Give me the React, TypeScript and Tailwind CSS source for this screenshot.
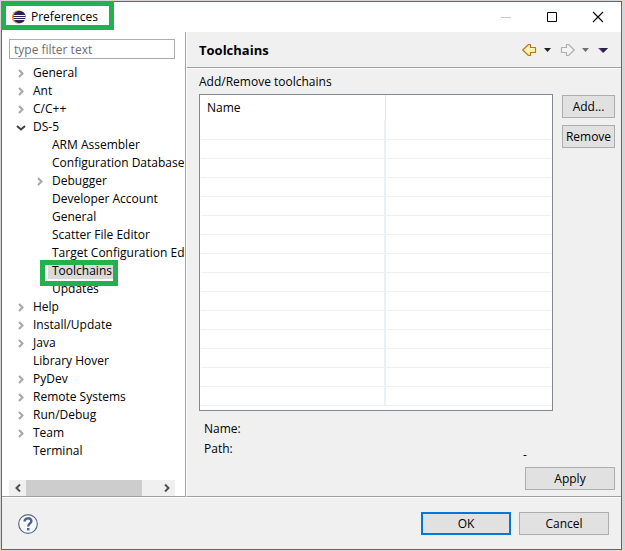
import { useState } from 'react'

type TreeItem = {
  label: string
  state?: 'open' | 'closed'
  child?: boolean
}

const treeItems: TreeItem[] = [
  { label: 'General', state: 'closed' },
  { label: 'Ant', state: 'closed' },
  { label: 'C/C++', state: 'closed' },
  { label: 'DS-5', state: 'open' },
  { label: 'ARM Assembler', child: true },
  { label: 'Configuration Database', child: true },
  { label: 'Debugger', state: 'closed', child: true },
  { label: 'Developer Account', child: true },
  { label: 'General', child: true },
  { label: 'Scatter File Editor', child: true },
  { label: 'Target Configuration Editor', child: true },
  { label: 'Toolchains', child: true },
  { label: 'Updates', child: true },
  { label: 'Help', state: 'closed' },
  { label: 'Install/Update', state: 'closed' },
  { label: 'Java', state: 'closed' },
  { label: 'Library Hover' },
  { label: 'PyDev', state: 'closed' },
  { label: 'Remote Systems', state: 'closed' },
  { label: 'Run/Debug', state: 'closed' },
  { label: 'Team', state: 'closed' },
  { label: 'Terminal' },
]

const emptyRows = Array.from({ length: 15 })

const buttonClass =
  'h-[23px] border border-[#adadad] bg-[#e1e1e1] text-center leading-[20px] hover:border-[#0078d7]'

function EclipseIcon() {
  return (
    <svg width="16" height="16" viewBox="0 0 16 16" aria-hidden="true">
      <circle cx="7.5" cy="8" r="6.7" fill="#f7941e" />
      <circle cx="8.4" cy="8" r="6.4" fill="#fff" />
      <circle cx="8.4" cy="8" r="6.2" fill="#2c2255" />
      <path d="M2.6 6.5h11.8M2.4 8.5h12.2M2.8 10.5h11.4" stroke="#fff" strokeWidth="1" />
    </svg>
  )
}

function Chevron({ state }: { state?: 'open' | 'closed' }) {
  return (
    <svg
      width="10"
      height="10"
      viewBox="0 0 10 10"
      fill="none"
      strokeWidth="2"
      className="shrink-0"
      aria-hidden="true"
    >
      {state === 'closed' && <path d="M3 2L6.5 5.5L3 9" stroke="#a6a6a6" />}
      {state === 'open' && <path d="M1 4L5 7.5L9 4" stroke="#404040" />}
    </svg>
  )
}

function Caret({ color }: { color: string }) {
  return (
    <svg width="7" height="4" viewBox="0 0 7 4" aria-hidden="true">
      <path d="M0 0h7L3.5 4z" fill={color} />
    </svg>
  )
}

export default function App() {
  const [selected, setSelected] = useState('Toolchains')

  return (
    <div className="flex min-h-screen bg-[#d6d6d6] pt-px pr-[3px] pb-px pl-px font-['Open_Sans','Noto_Sans',sans-serif] text-[12px] leading-[18px] text-black">
      <div className="relative flex min-w-0 flex-1 flex-col border border-[#1979ca] bg-[#f0f0f0]">
        {/* Title bar */}
        <header className="flex h-[30px] items-center bg-white pr-[17px] pl-[9px]">
          <EclipseIcon />
          <h1 className="ml-1 flex-1">Preferences</h1>
          <div className="flex items-center gap-[34px]">
            <button aria-label="Minimize" className="block">
              <svg width="12" height="12" viewBox="0 0 12 12" fill="none">
                <path d="M1 6.5h10" stroke="#c8c8c8" />
              </svg>
            </button>
            <button aria-label="Maximize" className="block">
              <svg width="12" height="12" viewBox="0 0 12 12" fill="none">
                <path d="M1.5 1.5h9v9h-9z" stroke="#000" />
              </svg>
            </button>
            <button aria-label="Close" className="block">
              <svg width="12" height="12" viewBox="0 0 12 12" fill="none">
                <path d="M1 1l10 10M11 1L1 11" stroke="#000" strokeWidth="1.1" />
              </svg>
            </button>
          </div>
        </header>

        <main className="flex flex-1 border-b border-white">
          {/* Category tree */}
          <aside className="flex w-[184px] shrink-0 flex-col border-r border-b border-r-[#a0a0a0] border-b-[#a0a0a0] bg-white pt-[7px] pr-[10px] pl-[7px]">
            <input
              type="text"
              aria-label="Filter preferences"
              placeholder="type filter text"
              className="h-5 w-full border border-[#abadb3] px-1 placeholder:text-[#6d6d6d]"
            />
            <ul className="mt-[5px] -mr-[9px] flex-1 overflow-hidden whitespace-nowrap">
              {treeItems.map((item, i) => (
                <li key={i} className={`flex h-[18px] items-center ${item.child ? 'pl-[26px]' : 'pl-[7px]'}`}>
                  <Chevron state={item.state} />
                  <button
                    onClick={() => setSelected(item.label)}
                    className={`ml-[3px] h-4 shrink-0 px-1 text-left leading-4 ${
                      item.label === selected ? 'bg-[#d9d9d9]' : ''
                    }`}
                  >
                    {item.label}
                  </button>
                </li>
              ))}
            </ul>
            <div className="flex h-4 items-center bg-[#f0f0f0]">
              <button aria-label="Scroll left" className="flex w-[17px] justify-center">
                <svg width="8" height="8" viewBox="0 0 8 8" fill="none">
                  <path d="M6 0.5L2.5 4L6 7.5" stroke="#505050" strokeWidth="2" />
                </svg>
              </button>
              <div className="h-full flex-1">
                <div className="h-full w-7/8 bg-[#cdcdcd]" />
              </div>
              <button aria-label="Scroll right" className="flex w-[17px] justify-center">
                <svg width="8" height="8" viewBox="0 0 8 8" fill="none">
                  <path d="M2 0.5L5.5 4L2 7.5" stroke="#505050" strokeWidth="2" />
                </svg>
              </button>
            </div>
          </aside>

          {/* Toolchains page */}
          <section className="flex min-w-0 flex-1 flex-col border-b border-l border-b-[#a0a0a0] border-l-white">
            <div className="flex h-9 items-center border-b border-[#a0a0a0] pt-px pr-[13px] pl-3">
              <h2 className="flex-1 text-[13px] font-bold">Toolchains</h2>
              <div className="flex items-center gap-[9px]">
                <div className="flex items-center gap-[7px]">
                  <button aria-label="Back">
                    <svg width="15" height="14" viewBox="0 0 15 14">
                      <path
                        d="M0.8 7L6.5 1.5H8.5V4.5H13.5V9.5H8.5V12.5H6.5z"
                        fill="#fff0bd"
                        stroke="#b87a14"
                        strokeWidth="1.2"
                        strokeLinejoin="round"
                      />
                    </svg>
                  </button>
                  <button aria-label="Back history">
                    <Caret color="#202020" />
                  </button>
                </div>
                <div className="flex items-center gap-[7px]">
                  <button aria-label="Forward">
                    <svg width="15" height="14" viewBox="0 0 15 14">
                      <path
                        d="M14.2 7L8.5 1.5H6.5V4.5H1.5V9.5H6.5V12.5H8.5z"
                        fill="#f4f4f4"
                        stroke="#b0b0b0"
                        strokeWidth="1.2"
                        strokeLinejoin="round"
                      />
                    </svg>
                  </button>
                  <button aria-label="Forward history">
                    <Caret color="#707070" />
                  </button>
                </div>
                <button aria-label="Page menu">
                  <svg width="10" height="5" viewBox="0 0 10 5">
                    <path d="M0 0h10L5 5z" fill="#6a35b5" />
                    <path d="M2 0h8L5.5 4.5z" fill="#2a2438" />
                  </svg>
                </button>
              </div>
            </div>

            <div className="flex flex-1 flex-col border-t border-white pt-1 pr-[6px] pb-[6px] pl-3">
              <p>Add/Remove toolchains</p>
              <div className="mt-[3px] flex items-start gap-[9px]">
                <div className="h-[317px] flex-1 border border-[#828790] bg-white px-px">
                  <table className="w-full table-fixed border-collapse">
                    <thead>
                      <tr className="h-[25px]">
                        <th className="border-r border-[#e5e5e5] pl-[6px] text-left font-normal">Name</th>
                        <th aria-label="Path" className="w-[166px]" />
                      </tr>
                    </thead>
                    <tbody>
                      {emptyRows.map((_, i) => (
                        <tr key={i} className="h-[19px] border-b border-[#f0f0f0]">
                          <td className="border-r-2 border-r-[#e8f0fb]" />
                          <td />
                        </tr>
                      ))}
                    </tbody>
                  </table>
                </div>
                <div className="flex w-[53px] flex-col gap-[7px] pt-px">
                  <button className={buttonClass}>Add...</button>
                  <button className={buttonClass}>Remove</button>
                </div>
              </div>
              <div className="mt-[9px] flex flex-col gap-[2px] pl-[5px]">
                <p>Name:</p>
                <div className="flex">
                  <p className="flex-1">Path:</p>
                  <p className="w-[92px] pt-[6px]">-</p>
                </div>
              </div>
              <div className="mt-auto flex justify-end">
                <button className={`${buttonClass} w-[90px]`}>Apply</button>
              </div>
            </div>
          </section>
        </main>

        {/* Dialog buttons */}
        <footer className="flex h-[51px] items-center gap-2 pr-3 pl-4">
          <button aria-label="Help" className="mr-auto">
            <svg width="20" height="20" viewBox="0 0 20 20" fill="none">
              <circle cx="10" cy="10" r="9.3" fill="#f6f7fa" stroke="#5a6c8c" strokeWidth="1.2" />
              <path
                d="M6.6 7.6C6.6 3.2 13.6 3.4 13.4 7.2C13.2 9.6 10.2 9.4 10.2 12.6"
                stroke="#4c628a"
                strokeWidth="2.4"
              />
              <path d="M9 14h2.5v2.4H9z" fill="#4c628a" />
            </svg>
          </button>
          <button className="h-[23px] w-[90px] border-2 border-[#0078d7] bg-[#e1e1e1] leading-[18px]">OK</button>
          <button className={`${buttonClass} w-[90px]`}>Cancel</button>
        </footer>

        {/* Highlight boxes */}
        <div className="pointer-events-none absolute -top-px -left-px h-[29px] w-[113px] border-[5px] border-[#22b14c]" />
        <div className="pointer-events-none absolute top-[258px] left-[38px] h-[26px] w-[78px] border-[5px] border-[#22b14c]" />
      </div>
    </div>
  )
}
